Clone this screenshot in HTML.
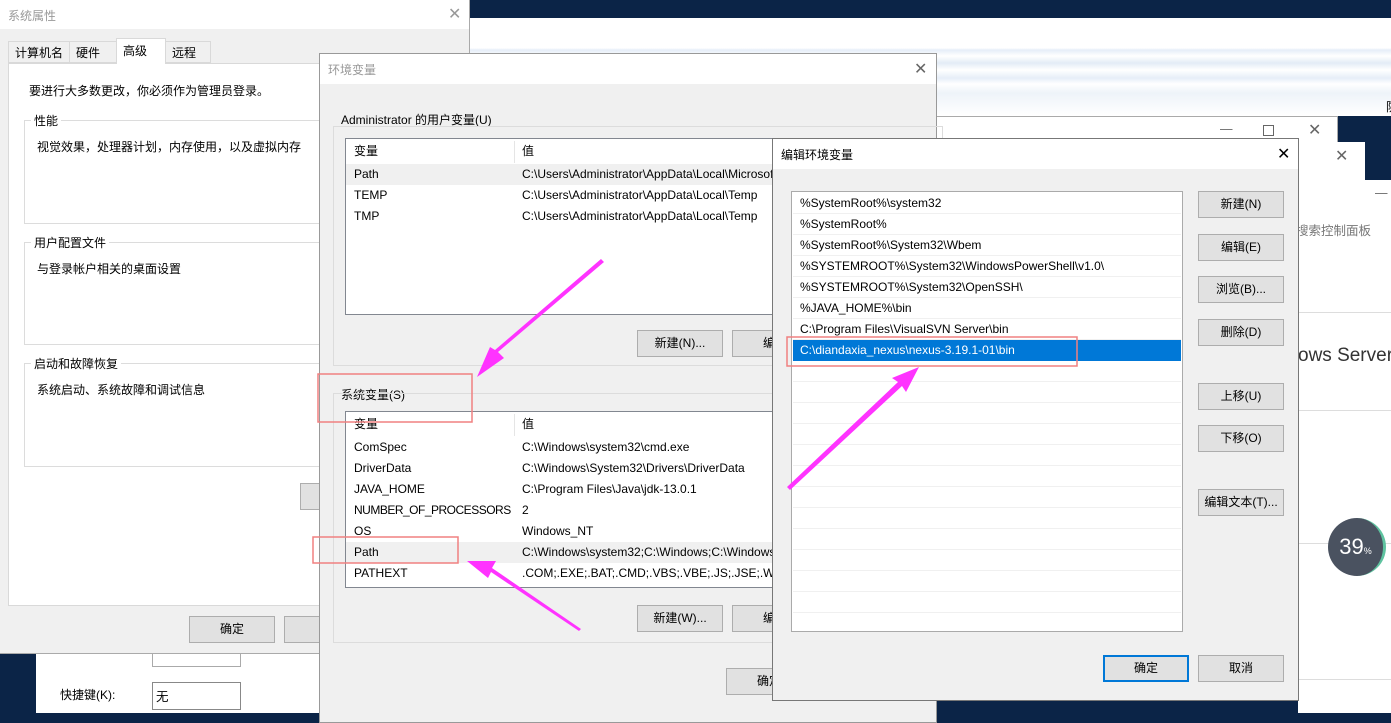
<!DOCTYPE html>
<html><head><meta charset="utf-8"><style>
*{margin:0;padding:0;box-sizing:border-box}
body{width:1391px;height:713px;overflow:hidden;position:relative;background:#0b2447;font-family:"Liberation Sans","Noto Sans CJK SC",sans-serif;font-size:12.5px;color:#000}
.a{position:absolute;white-space:nowrap}
.win{position:absolute;background:#f0f0f0;border:1px solid #888}
.tb{position:absolute;left:0;right:0;top:0;height:30px;background:#fff;color:#999;padding:7px 0 0 8px;font-size:12px}
.btn{position:absolute;width:86px;height:27px;background:#e1e1e1;border:1px solid #adadad;text-align:center;line-height:25px;font-size:12px;white-space:nowrap;overflow:hidden}
.grp{position:absolute;border:1px solid #dcdcdc}
.gl{position:absolute;top:-9px;left:6px;background:#fff;padding:0 3px;white-space:nowrap}
.list{position:absolute;background:#fff;border:1px solid #828790;overflow:hidden;font-size:12px}
.row{position:absolute;left:0;right:0;height:21px;line-height:21px;white-space:nowrap}
.row span{position:absolute}
.x{position:absolute;font-size:16px;color:#333}
.er{position:absolute;left:1px;right:1px;height:21px;line-height:21px;padding-left:7px;border-bottom:1px solid #f0f0f0;white-space:nowrap}
</style></head><body>
<div class="a" style="left:470px;top:18px;width:921px;height:98px;background:linear-gradient(#fff 0,#fff 30px,#e6eef8 32px,#fff 38px,#e3ecf6 45px,#fff 52px,#e6eef8 60px,#fff 66px,#eef3f9 75px,#fff 98px)"></div>
<div class="a" style="left:1386px;top:98px;font-size:12px">防</div>
<div class="a" style="left:936px;top:116px;width:402px;height:30px;background:#fff;border:1px solid #aaa"></div>
<div class="a" style="left:1220px;top:122px;color:#666">—</div>
<div class="a" style="left:1263px;top:125px;width:11px;height:11px;border:1px solid #666"></div>
<div class="x" style="left:1308px;top:120px;color:#666">✕</div>
<div class="a" style="left:1298px;top:142px;width:67px;height:38px;background:#fff"></div>
<div class="x" style="left:1335px;top:146px;color:#666">✕</div>
<div class="a" style="left:1298px;top:180px;width:93px;height:533px;background:#fff"></div>
<div class="a" style="left:1375px;top:186px;color:#666">—</div>
<div class="a" style="left:1296px;top:220px;color:#777;font-size:12.5px">搜索控制面板</div>
<div class="a" style="left:1298px;top:312px;width:93px;border-top:1px solid #ddd"></div>
<div class="a" style="left:1298px;top:345px;font-size:19px;color:#333">ows Server<sup style="font-size:8px">®</sup> 2</div>
<div class="a" style="left:1298px;top:410px;width:93px;border-top:1px solid #ddd"></div>
<div class="a" style="left:1298px;top:543px;width:93px;border-top:1px solid #ddd"></div>
<div class="a" style="left:1298px;top:679px;width:93px;border-top:1px solid #ddd"></div>
<div class="a" style="left:1328px;top:518px;width:58px;height:58px;border-radius:50%;background:#4a5260;border-right:3px solid #5fc3a0;color:#fff;font-size:22px;line-height:58px;text-align:center">39<span style="font-size:9px">%</span></div>

<div class="a" style="left:36px;top:653px;width:284px;height:60px;background:#fff"></div>
<div class="a" style="left:152px;top:653px;width:89px;height:14px;border:1px solid #aaa;border-top:none;background:#fff"></div>
<div class="a" style="left:60px;top:686px;font-size:12px">快捷键(K):</div>
<div class="a" style="left:152px;top:682px;width:89px;height:28px;border:1px solid #888;background:#fff;padding:3px 3px">无</div>

<div class="win" style="left:-1px;top:-1px;width:471px;height:655px;border-color:#aaa">
 <div class="tb" style="height:29px">系统属性</div>
 <div class="x" style="left:448px;top:4px;color:#999">✕</div>
 <div class="a" style="left:8px;top:41px;width:62px;height:22px;border:1px solid #d9d9d9;background:#f0f0f0;padding:2px 6px;font-size:12px">计算机名</div>
 <div class="a" style="left:69px;top:41px;width:48px;height:22px;border:1px solid #d9d9d9;background:#f0f0f0;padding:2px 6px;font-size:12px">硬件</div>
 <div class="a" style="left:116px;top:38px;width:50px;height:26px;border:1px solid #d9d9d9;border-bottom:none;background:#fff;padding:3px 6px;z-index:2;font-size:12px">高级</div>
 <div class="a" style="left:165px;top:41px;width:46px;height:22px;border:1px solid #d9d9d9;background:#f0f0f0;padding:2px 6px;font-size:12px">远程</div>
 <div class="a" style="left:8px;top:63px;width:462px;height:543px;background:#fff;border:1px solid #d9d9d9;font-size:12px">
  <div class="a" style="left:20px;top:18px">要进行大多数更改，你必须作为管理员登录。</div>
  <div class="grp" style="left:15px;top:56px;width:460px;height:104px"><div class="gl">性能</div><div class="a" style="left:12px;top:17px">视觉效果，处理器计划，内存使用，以及虚拟内存</div></div>
  <div class="grp" style="left:15px;top:178px;width:460px;height:103px"><div class="gl">用户配置文件</div><div class="a" style="left:12px;top:17px">与登录帐户相关的桌面设置</div></div>
  <div class="grp" style="left:15px;top:299px;width:460px;height:104px"><div class="gl">启动和故障恢复</div><div class="a" style="left:12px;top:17px">系统启动、系统故障和调试信息</div></div>
  <div class="btn" style="left:291px;top:419px;width:40px"></div>
 </div>
 <div class="btn" style="left:189px;top:616px">确定</div>
 <div class="btn" style="left:284px;top:616px">取</div>
</div>

<div class="win" style="left:319px;top:53px;width:618px;height:670px;border-color:#999">
 <div class="tb">环境变量</div>
 <div class="x" style="left:594px;top:5px;color:#666">✕</div>
 <div class="a" style="left:21px;top:57px;font-size:12px">Administrator 的用户变量(U)</div>
 <div class="grp" style="left:13px;top:72px;width:610px;height:240px"></div>
 <div class="list" style="left:25px;top:84px;width:600px;height:177px">
  <div class="row" style="top:2px"><span style="left:8px">变量</span><span style="left:176px">值</span></div>
  <div class="a" style="left:168px;top:2px;height:22px;border-left:1px solid #e5e5e5"></div>
  <div class="row" style="top:25px;background:#f0f0f0"><span style="left:8px">Path</span><span style="left:176px">C:\Users\Administrator\AppData\Local\Microsoft</span></div>
  <div class="row" style="top:46px"><span style="left:8px">TEMP</span><span style="left:176px">C:\Users\Administrator\AppData\Local\Temp</span></div>
  <div class="row" style="top:67px"><span style="left:8px">TMP</span><span style="left:176px">C:\Users\Administrator\AppData\Local\Temp</span></div>
 </div>
 <div class="btn" style="left:317px;top:276px">新建(N)...</div>
 <div class="btn" style="left:412px;top:276px">编辑</div>
 <div class="a" style="left:21px;top:332px;font-size:12px">系统变量(S)</div>
 <div class="grp" style="left:13px;top:339px;width:610px;height:250px"></div>
 <div class="list" style="left:25px;top:357px;width:600px;height:177px">
  <div class="row" style="top:2px"><span style="left:8px">变量</span><span style="left:176px">值</span></div>
  <div class="a" style="left:168px;top:2px;height:22px;border-left:1px solid #e5e5e5"></div>
  <div class="row" style="top:25px"><span style="left:8px">ComSpec</span><span style="left:176px">C:\Windows\system32\cmd.exe</span></div>
  <div class="row" style="top:46px"><span style="left:8px">DriverData</span><span style="left:176px">C:\Windows\System32\Drivers\DriverData</span></div>
  <div class="row" style="top:67px"><span style="left:8px">JAVA_HOME</span><span style="left:176px">C:\Program Files\Java\jdk-13.0.1</span></div>
  <div class="row" style="top:88px"><span style="left:8px;letter-spacing:-0.5px">NUMBER_OF_PROCESSORS</span><span style="left:176px">2</span></div>
  <div class="row" style="top:109px"><span style="left:8px">OS</span><span style="left:176px">Windows_NT</span></div>
  <div class="row" style="top:130px;background:#f0f0f0"><span style="left:8px">Path</span><span style="left:176px">C:\Windows\system32;C:\Windows;C:\Windows</span></div>
  <div class="row" style="top:151px"><span style="left:8px">PATHEXT</span><span style="left:176px">.COM;.EXE;.BAT;.CMD;.VBS;.VBE;.JS;.JSE;.WSF</span></div>
 </div>
 <div class="btn" style="left:317px;top:551px">新建(W)...</div>
 <div class="btn" style="left:412px;top:551px">编辑</div>
 <div class="btn" style="left:406px;top:614px">确定</div>
</div>

<div class="win" style="left:772px;top:138px;width:527px;height:563px;border-color:#777">
 <div class="tb" style="color:#000">编辑环境变量</div>
 <div class="x" style="left:504px;top:5px;color:#000">✕</div>
 <div class="list" style="left:18px;top:52px;width:392px;height:441px;border-color:#aaa">
  <div class="er" style="top:1px">%SystemRoot%\system32</div>
  <div class="er" style="top:22px">%SystemRoot%</div>
  <div class="er" style="top:43px">%SystemRoot%\System32\Wbem</div>
  <div class="er" style="top:64px">%SYSTEMROOT%\System32\WindowsPowerShell\v1.0\</div>
  <div class="er" style="top:85px">%SYSTEMROOT%\System32\OpenSSH\</div>
  <div class="er" style="top:106px">%JAVA_HOME%\bin</div>
  <div class="er" style="top:127px">C:\Program Files\VisualSVN Server\bin</div>
  <div class="er" style="top:148px;background:#0078d7;color:#fff;border-bottom:none">C:\diandaxia_nexus\nexus-3.19.1-01\bin</div>
  <div class="er" style="top:169px"></div><div class="er" style="top:190px"></div><div class="er" style="top:211px"></div><div class="er" style="top:232px"></div><div class="er" style="top:253px"></div><div class="er" style="top:274px"></div><div class="er" style="top:295px"></div><div class="er" style="top:316px"></div><div class="er" style="top:337px"></div><div class="er" style="top:358px"></div><div class="er" style="top:379px"></div><div class="er" style="top:400px"></div>
 </div>
 <div class="btn" style="left:425px;top:52px">新建(N)</div>
 <div class="btn" style="left:425px;top:95px">编辑(E)</div>
 <div class="btn" style="left:425px;top:137px">浏览(B)...</div>
 <div class="btn" style="left:425px;top:180px">删除(D)</div>
 <div class="btn" style="left:425px;top:244px">上移(U)</div>
 <div class="btn" style="left:425px;top:286px">下移(O)</div>
 <div class="btn" style="left:425px;top:350px">编辑文本(T)...</div>
 <div class="btn" style="left:330px;top:516px;border:2px solid #0078d7;line-height:23px">确定</div>
 <div class="btn" style="left:425px;top:516px">取消</div>
</div>

<svg class="a" style="left:0;top:0" width="1391" height="713">
 <g fill="none" stroke="#f08080" stroke-width="1.5">
  <rect x="318" y="374" width="154" height="48"/>
  <rect x="313" y="537" width="145" height="26"/>
  <rect x="787" y="337" width="290" height="29"/>
 </g>
 <g fill="#ff33ff">
  <polygon points="604,262 498,352 504,358 477,377 490,347 495,350 601,259"/>
  <polygon points="579,631 491,572 488,578 467,561 496,561 492,568 581,629"/>
  <polygon points="787,487 898,382 892,378 919,367 906,392 902,386 790,490"/>
 </g>
</svg>
</body></html>
